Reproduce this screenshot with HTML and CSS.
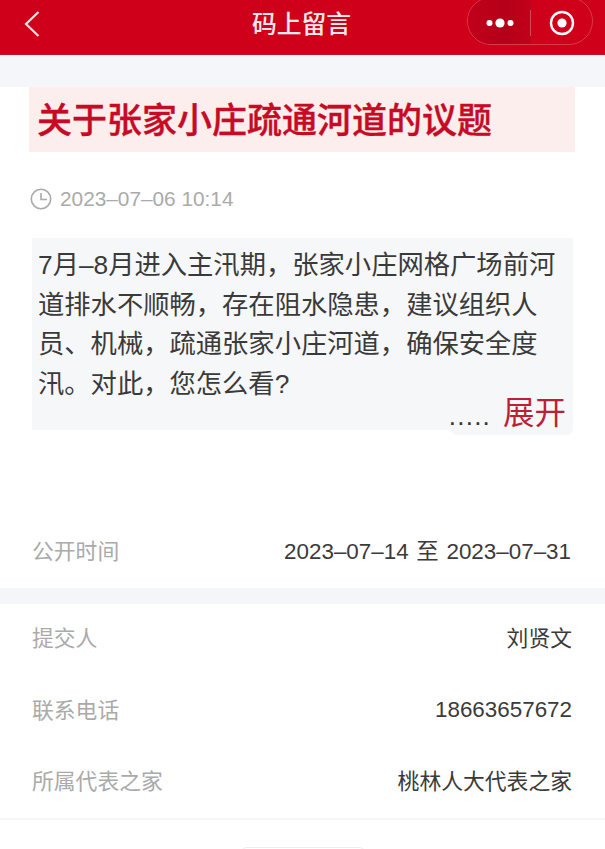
FILE: index.html
```html
<!DOCTYPE html>
<html lang="zh-CN">
<head>
    <meta charset="UTF-8">
    <meta name="viewport" content="width=device-width, initial-scale=1.0">
    <title>码上留言</title>
    <link rel="stylesheet" href="styles.css">
</head>
<body>
    <header class="navbar">
        <svg class="back" width="16" height="26" viewBox="0 0 16 26">
            <path d="M14.5 1 L2 13 L14.5 25" fill="none" stroke="#f6dfe2" stroke-width="2.2"/>
        </svg>
        <h1>码上留言</h1>
        <div class="capsule">
            <div class="capsule-more">
                <svg width="30" height="10" viewBox="0 0 30 10">
                    <circle cx="4.5" cy="5" r="3" fill="#fff"/>
                    <circle cx="15" cy="5" r="4.6" fill="#fff"/>
                    <circle cx="25.5" cy="5" r="3" fill="#fff"/>
                </svg>
            </div>
            <div class="capsule-close">
                <svg width="26" height="26" viewBox="0 0 26 26">
                    <circle cx="13" cy="13" r="11" fill="none" stroke="#fff" stroke-width="2.4"/>
                    <circle cx="13" cy="13" r="4.6" fill="#fff"/>
                </svg>
            </div>
        </div>
    </header>

    <section class="card topic">
        <h2 class="topic-title">关于张家小庄疏通河道的议题</h2>
        <div class="topic-date">
            <svg width="22" height="22" viewBox="0 0 22 22">
                <circle cx="11" cy="11" r="9.7" fill="none" stroke="#aaa" stroke-width="1.6"/>
                <path d="M11 5 V11.5 H17" fill="none" stroke="#aaa" stroke-width="1.6"/>
            </svg>
            <span>2023–07–06 10:14</span>
        </div>
        <div class="topic-body">
            <p>7月–8月进入主汛期，张家小庄网格广场前河道排水不顺畅，存在阻水隐患，建议组织人员、机械，疏通张家小庄河道，确保安全度汛。对此，您怎么看?</p>
            <div class="expand"><span class="dots">.....</span><span class="expand-link">展开</span></div>
        </div>
        <div class="row public-row">
            <span class="label">公开时间</span>
            <span class="value value-num">2023–07–14 至 2023–07–31</span>
        </div>
    </section>

    <section class="card info">
        <div class="row"><span class="label">提交人</span><span class="value">刘贤文</span></div>
        <div class="row"><span class="label">联系电话</span><span class="value value-num">18663657672</span></div>
        <div class="row"><span class="label">所属代表之家</span><span class="value">桃林人大代表之家</span></div>
    </section>

    <div class="footer">
        <div class="footer-pill"></div>
    </div>
</body>
</html>
```

FILE: styles.css
```css
* {
    box-sizing: border-box;
}
body {
    margin: 0;
    height: 849px;
    overflow: hidden;
    background: #f5f6f9;
    font-family: "Liberation Sans", "Noto Sans CJK SC", sans-serif;
    color: #333;
}
.navbar {
    position: relative;
    height: 55px;
    background: #cf0019;
    display: flex;
    align-items: center;
    justify-content: center;
    border-bottom: 1px solid #c2112b;
}
.navbar h1 {
    margin: 0 2px 11px 0;
    font-size: 24.8px;
    font-weight: 500;
    color: #f8e8ea;
}
.back {
    position: absolute;
    left: 24px;
    top: 11px;
}
.capsule {
    position: absolute;
    left: 467px;
    top: -3px;
    width: 126px;
    height: 48px;
    border-radius: 24px;
    border: 1px solid #d83a4e;
    display: flex;
    align-items: center;
    overflow: hidden;
}
.capsule-more {
    width: 63px;
    height: 100%;
    background: linear-gradient(90deg, #c0001a, #b50019 60%, #c20019);
    display: flex;
    align-items: center;
    justify-content: center;
    padding-top: 4px;
    position: relative;
}
.capsule-more::after {
    content: "";
    position: absolute;
    right: 0;
    top: 12px;
    height: 26px;
    border-right: 1px solid #d8475a;
}
.capsule-close {
    flex: 1;
    display: flex;
    align-items: center;
    justify-content: center;
    padding-top: 4px;
}
.card {
    background: #fff;
}
.topic {
    margin-top: 32px;
    height: 501px;
    padding: 0 32px;
    display: flex;
    flex-direction: column;
}
.topic-title {
    margin: 0 -2px 0 -3px;
    height: 65px;
    padding-left: 8px;
    background: #fdeeee;
    font-size: 35px;
    font-weight: 500;
    -webkit-text-stroke: 0.4px #c70b25;
    line-height: 67px;
    color: #c70b25;
    white-space: nowrap;
}
.topic-date {
    margin: 35px 0 0 -2px;
    display: flex;
    align-items: center;
    gap: 8px;
    height: 24px;
    font-size: 20.8px;
    color: #aaa;
}
.topic-body {
    position: relative;
    margin-top: 27px;
    height: 192px;
    width: 541px;
    padding: 8px 0 0 6px;
    background: #f6f7f9;
}
.topic-body p {
    margin: 0;
    width: 524px;
    height: 148px;
    font-size: 26.3px;
    line-height: 39.7px;
    color: #3a3a3a;
}
.expand {
    position: absolute;
    right: 0;
    bottom: -5px;
    width: 122px;
    height: 38px;
    display: flex;
    align-items: center;
    justify-content: flex-end;
    gap: 12px;
    padding: 0 7px 4px 0;
    background: #f6f7f9;
    border-radius: 0 0 6px 6px;
    white-space: nowrap;
}
.dots {
    font-size: 26px;
    line-height: 1;
    color: #333;
    letter-spacing: 1.2px;
    padding-top: 3px;
}
.expand-link {
    flex-shrink: 0;
    font-size: 31.5px;
    line-height: 1;
    color: #bd1f35;
}
.row {
    display: flex;
    justify-content: space-between;
    align-items: center;
    height: 71.5px;
    padding-bottom: 6px;
    font-size: 21.8px;
}
.label {
    color: #aaa;
}
.value {
    color: #3a3a3a;
}
.value-num {
    font-size: 22.4px;
    word-spacing: 1.5px;
    padding-top: 3px;
}
.public-row {
    margin-top: 85px;
    width: 539px;
    padding-bottom: 6px;
}
.public-row .label {
    padding-top: 3px;
}
.info {
    margin-top: 16px;
    height: 216px;
    padding: 0 33px 0 32px;
    border-bottom: 2px solid #f5f6f9;
}
.footer {
    height: 40px;
    background: #fff;
    display: flex;
    justify-content: center;
    padding-top: 27px;
}
.footer-pill {
    width: 122px;
    height: 20px;
    border: 1px solid #eee;
    border-radius: 4px;
    background: #fff;
}
```
